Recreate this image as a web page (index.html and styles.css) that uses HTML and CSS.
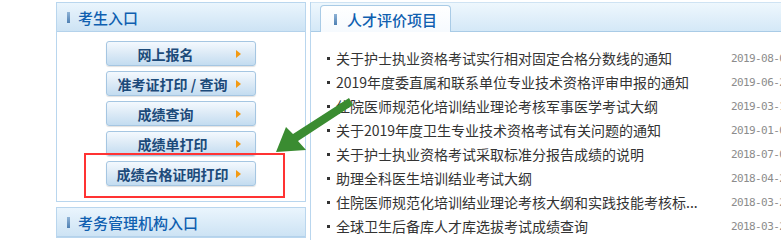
FILE: index.html
```html
<!DOCTYPE HTML>
<html>

<head>
	<meta charset="utf-8">

	<link rel="stylesheet" href="styles.css">
</head>

<body>

	<div class="page">
		<div class="side">
			<div class="box">
				<div class="box-hd"><i class="mark"></i>考生入口</div>
				<div class="box-bd">
					<a class="btn short">网上报名<i class="tri"></i></a>
					<a class="btn">准考证打印 / 查询<i class="tri"></i></a>
					<a class="btn short">成绩查询<i class="tri"></i></a>
					<a class="btn">成绩单打印<i class="tri"></i></a>
					<a class="btn">成绩合格证明打印<i class="tri"></i></a>
				</div>
			</div>
			<div class="box">
				<div class="box-hd"><i class="mark"></i>考务管理机构入口</div>
			</div>
		</div>

		<div class="main">
			<div class="main-hd">
				<div class="tab"><i class="mark"></i>人才评价项目</div>
			</div>
			<ul class="news">
				<li><span class="title">关于护士执业资格考试实行相对固定合格分数线的通知</span><span class="date">2019-08-06</span></li>
				<li><span class="title">2019年度委直属和联系单位专业技术资格评审申报的通知</span><span class="date">2019-06-25</span></li>
				<li><span class="title">住院医师规范化培训结业理论考核军事医学考试大纲</span><span class="date">2019-03-12</span></li>
				<li><span class="title">关于2019年度卫生专业技术资格考试有关问题的通知</span><span class="date">2019-01-08</span></li>
				<li><span class="title">关于护士执业资格考试采取标准分报告成绩的说明</span><span class="date">2018-07-05</span></li>
				<li><span class="title">助理全科医生培训结业考试大纲</span><span class="date">2018-04-20</span></li>
				<li><span class="title">住院医师规范化培训结业理论考核大纲和实践技能考核标...</span><span class="date">2018-03-28</span></li>
				<li><span class="title">全球卫生后备库人才库选拔考试成绩查询</span><span class="date">2018-03-21</span></li>
			</ul>
		</div>

		<div class="mark-box"></div>
		<svg class="pointer" width="781" height="240" viewBox="0 0 781 240">
			<polygon points="276,152 286,127 293,134 349,98 353,105 298,141 306,150" fill="#3a8c31"/>
		</svg>
	</div>

</body>

</html>
```

FILE: styles.css
```css
* {
	box-sizing: border-box;
}

body {
	margin: 0;
	background: #fff;
	font-family: "Noto Sans CJK SC", sans-serif;
	overflow: hidden;
}

.page {
	position: relative;
	display: flex;
	align-items: flex-start;
	width: 781px;
	height: 240px;
	padding: 2px 0 0 56px;
	overflow: hidden;
}

.side {
	width: 250px;
	flex: none;
}

.box {
	border: 1px solid #b9d6ee;
}

.box + .box {
	margin-top: 5px;
}

.box-hd {
	height: 29px;
	display: flex;
	align-items: center;
	padding-left: 10px;
	font-size: 15px;
	font-weight: 500;
	color: #0f5fb0;
	background: linear-gradient(#eaf5fd, #cde3f4);
	border-bottom: 1px solid #b4d2eb;
}

.mark {
	width: 3px;
	height: 11px;
	margin-right: 8px;
	background: linear-gradient(#8fb3d6, #4f80b3);
}

.box-bd {
	display: flex;
	flex-direction: column;
	gap: 5px;
	padding: 9px 0 15px 49px;
}

.btn {
	position: relative;
	width: 150px;
	height: 25px;
	display: flex;
	align-items: center;
	justify-content: center;
	padding-right: 17px;
	border: 1px solid #a5c6e2;
	border-radius: 3px;
	background: linear-gradient(#f4f9fe, #dceaf6 50%, #c3dcf0);
	box-shadow: 0 1px 1px rgba(0, 0, 0, .12);
	font-size: 14px;
	font-weight: bold;
	color: #1c4a7a;
}

.btn.short {
	padding-right: 31px;
}

.tri {
	position: absolute;
	right: 14px;
	top: 8px;
	border-left: 5px solid #f39a12;
	border-top: 4px solid transparent;
	border-bottom: 4px solid transparent;
}

.main {
	flex: 1;
	height: 238px;
	margin-left: 4px;
	border-left: 1px solid #b9d6ee;
}

.main-hd {
	height: 30px;
	display: flex;
	align-items: flex-end;
	padding-left: 9px;
	background: linear-gradient(#eef7fd, #d4e8f7);
	border-top: 1px solid #cfe3f3;
	border-bottom: 1px solid #a9cbe6;
}

.tab {
	width: 131px;
	height: 27px;
	margin-bottom: -1px;
	display: flex;
	align-items: center;
	padding-left: 13px;
	background: linear-gradient(#fff, #f6fafe);
	border: 1px solid #a9cbe6;
	border-bottom: none;
	border-radius: 4px 4px 0 0;
	font-size: 15px;
	font-weight: 500;
	color: #0f5fb0;
}

.tab .mark {
	margin-right: 10px;
}

.news {
	margin: 0;
	padding: 14px 0 0 16px;
	list-style: none;
}

.news li {
	height: 24px;
	display: flex;
	align-items: center;
	white-space: nowrap;
}

.news li::before {
	content: "";
	width: 3px;
	height: 3px;
	margin-right: 6px;
	background: #333;
	flex: none;
}

.title {
	width: 395px;
	flex: none;
	overflow: hidden;
	font-size: 14px;
	color: #333;
}

.date {
	font-family: "DejaVu Sans Mono", monospace;
	font-size: 11px;
	letter-spacing: -0.6px;
	color: #8c8c8c;
}

.mark-box {
	position: absolute;
	left: 84px;
	top: 153px;
	width: 201px;
	height: 45px;
	border: 2px solid #f33;
}

.pointer {
	position: absolute;
	left: 0;
	top: 0;
	pointer-events: none;
}
```
